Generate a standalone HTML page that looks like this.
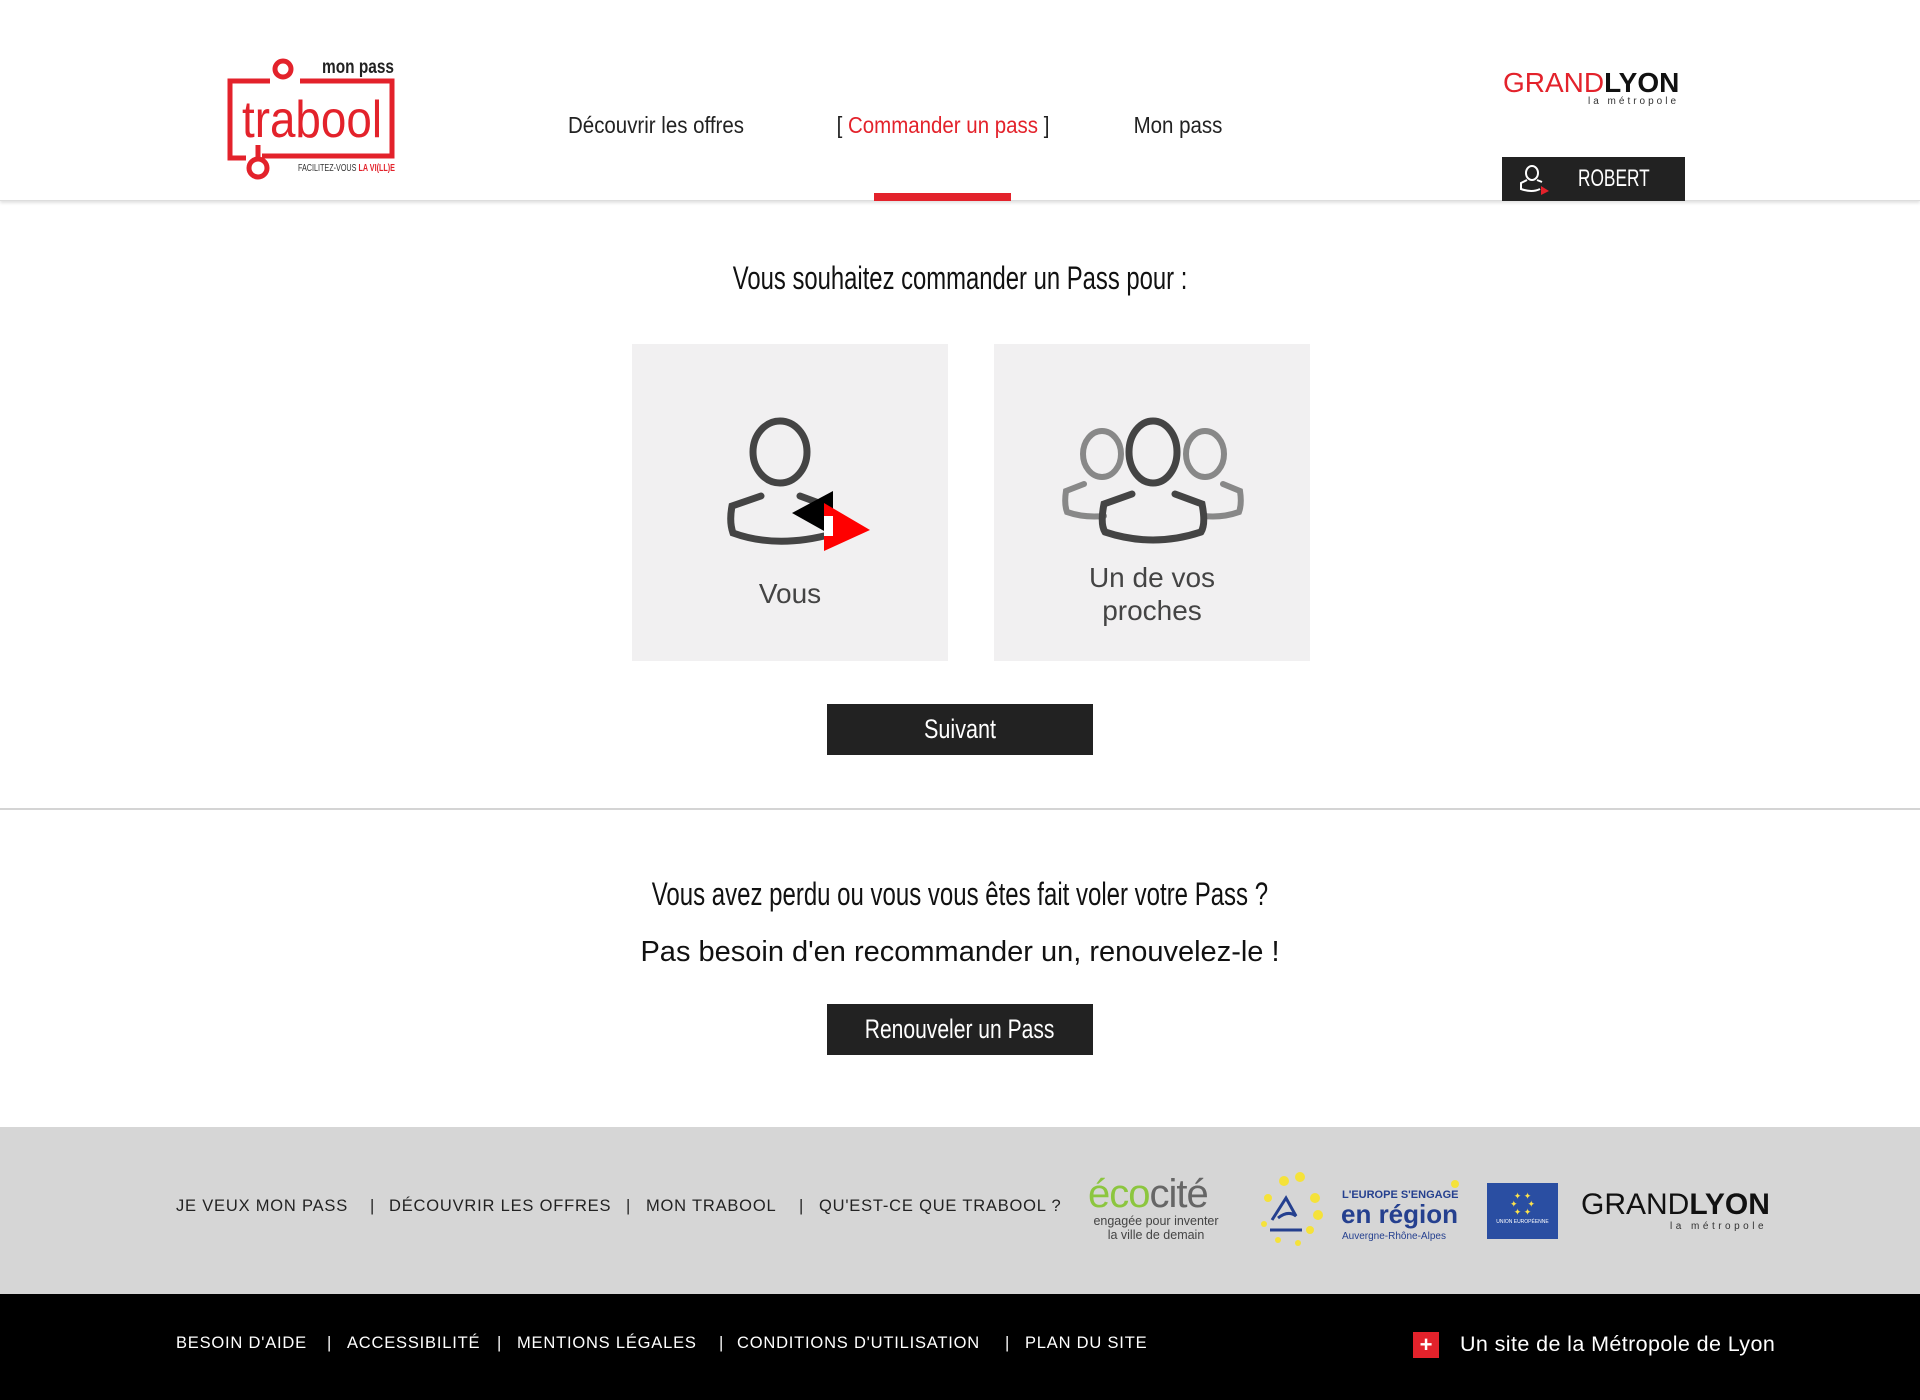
<!DOCTYPE html>
<html><head><meta charset="utf-8"><style>
*{margin:0;padding:0;box-sizing:border-box}
body{width:1920px;height:1400px;background:#fff;font-family:"Liberation Sans",sans-serif;position:relative;overflow:hidden}
.a{position:absolute}
.c{display:inline-block;transform:scaleX(.77)}
.nav{top:112px;font-size:23px;color:#222;white-space:nowrap;transform:translateX(-50%) scaleX(.89)}
.card{background:#f1f0f1;width:316px;height:317px;top:344px}
.btn{background:#222;color:#fff;text-align:center;font-size:27px;left:827px;width:266px;height:51px;line-height:51px}
.fl{position:absolute;font-size:16.5px;color:#222;letter-spacing:.8px;top:1197px;white-space:nowrap}
.bl{position:absolute;font-size:16.5px;color:#fff;letter-spacing:.8px;top:1334px;white-space:nowrap}
</style></head><body>
<div class="a" style="left:0;top:0;width:1920px;height:201px;border-bottom:1px solid #ddd;box-shadow:0 2px 3px rgba(0,0,0,.12)"></div>
<svg class="a" style="left:226px;top:55px" width="172" height="128" viewBox="0 0 172 128">
<g fill="none" stroke="#e3222b" stroke-width="5">
<path d="M44 26 H4 V103 H20"/><path d="M74 26 H166 V101 H36"/>
<circle cx="57" cy="14" r="8"/>
<circle cx="32" cy="113" r="9"/><path d="M32 104 V90"/>
</g>
<text x="16" y="82" font-family="Liberation Sans,sans-serif" font-size="52" fill="#e3222b" textLength="140" lengthAdjust="spacingAndGlyphs">trabool</text>
<text x="96" y="18" font-family="Liberation Sans,sans-serif" font-size="19" font-weight="bold" fill="#222" textLength="72" lengthAdjust="spacingAndGlyphs">mon pass</text>
<text x="72" y="116" font-family="Liberation Sans,sans-serif" font-size="10" fill="#333" textLength="97" lengthAdjust="spacingAndGlyphs">FACILITEZ-VOUS <tspan fill="#e3222b" font-weight="bold">LA VI(LL)E</tspan></text>
</svg>
<div class="a nav" style="left:656px">Découvrir les offres</div>
<div class="a nav" style="left:943px;color:#e3222b"><span style="color:#222">[ </span>Commander un pass<span style="color:#222"> ]</span></div>
<div class="a nav" style="left:1178px">Mon pass</div>
<div class="a" style="left:874px;top:193px;width:137px;height:8px;background:#e3222b"></div>
<div class="a" style="left:1503px;top:67px;font-size:28px;white-space:nowrap"><span style="color:#e3222b">GRAND</span><b style="color:#111">LYON</b></div>
<div class="a" style="left:1588px;top:96px;font-size:10px;letter-spacing:3px;color:#333">la métropole</div>
<div class="a" style="left:1502px;top:157px;width:183px;height:44px;background:#222"></div>
<svg class="a" style="left:1518px;top:164px" width="36" height="32" viewBox="0 0 36 32"><g fill="none" stroke="#fff" stroke-width="2"><ellipse cx="14" cy="9" rx="6" ry="7"/><path d="M9 16 L3 19 V25 Q14 29 22 25"/><path d="M19 16 L24 18"/></g><path d="M23 22 L31 27 L23 31Z" fill="#e3222b"/></svg>
<div class="a" style="left:1578px;top:165px;color:#fff;font-size:24px;transform:scaleX(.72);transform-origin:left">ROBERT</div>

<div class="a" style="left:0;width:1920px;text-align:center;top:260px;font-size:32px;color:#111"><span class="c" style="transform:scaleX(.745)">Vous souhaitez commander un Pass pour :</span></div>
<div class="a card" style="left:632px"></div>
<div class="a card" style="left:994px"></div>
<svg class="a" style="left:632px;top:344px" width="316" height="317">
<g fill="none" stroke="#444" stroke-width="7" stroke-linecap="round"><ellipse cx="148" cy="108" rx="27" ry="31"/><path d="M129 152 L100 162 Q97 178 101 189 Q145 205 200 190"/><path d="M168 152 L195 162"/></g>
<path d="M160 169 L201 147 L201 192Z" fill="#000"/><path d="M192 159 L238 186 L192 207Z" fill="#f00"/><rect x="192" y="172" width="9" height="20" fill="#fff"/>
<text x="158" y="259" text-anchor="middle" font-size="28" fill="#444">Vous</text>
</svg>
<svg class="a" style="left:994px;top:344px" width="316" height="317">
<g fill="none" stroke="#888" stroke-width="6" stroke-linecap="round"><ellipse cx="108" cy="110" rx="19" ry="23"/><path d="M90 140 L72 147 Q70 160 73 168 Q90 174 110 172"/><ellipse cx="211" cy="110" rx="19" ry="23"/><path d="M229 140 L246 147 Q248 160 245 168 Q228 174 210 172"/></g>
<g fill="none" stroke="#444" stroke-width="7" stroke-linecap="round"><ellipse cx="159" cy="108" rx="24" ry="31"/><path d="M138 150 L110 160 Q106 180 111 188 Q159 204 207 188 Q212 180 208 160 L181 150"/></g>
<text x="158" y="243" text-anchor="middle" font-size="28" fill="#444">Un  de vos</text>
<text x="158" y="276" text-anchor="middle" font-size="28" fill="#444">proches</text>
</svg>
<div class="a btn" style="top:704px"><span class="c" style="transform:scaleX(.8)">Suivant</span></div>
<div class="a" style="left:0;top:808px;width:1920px;height:2px;background:#d4d4d4"></div>
<div class="a" style="left:0;width:1920px;text-align:center;top:876px;font-size:32px;color:#111"><span class="c" style="transform:scaleX(.75)">Vous avez perdu ou vous vous êtes fait voler votre Pass ?</span></div>
<div class="a" style="left:0;width:1920px;text-align:center;top:936px;font-size:29px;color:#111">Pas besoin d'en recommander un, renouvelez-le !</div>
<div class="a btn" style="top:1004px"><span class="c" style="transform:scaleX(.78)">Renouveler un Pass</span></div>

<div class="a" style="left:0;top:1127px;width:1920px;height:168px;background:#d6d6d6"></div>
<span class="fl" style="left:176px">JE VEUX MON PASS</span><span class="fl" style="left:370px">|</span>
<span class="fl" style="left:389px">DÉCOUVRIR LES OFFRES</span><span class="fl" style="left:626px">|</span>
<span class="fl" style="left:646px">MON TRABOOL</span><span class="fl" style="left:799px">|</span>
<span class="fl" style="left:819px">QU'EST-CE QUE TRABOOL ?</span>
<div class="a" style="left:1088px;top:1172px;font-size:40px;letter-spacing:-1px"><span style="color:#8cc63f">éco</span><span style="color:#666">cité</span></div>
<div class="a" style="left:1088px;top:1214px;font-size:12.5px;color:#444;text-align:center;width:136px;line-height:14px">engagée pour inventer<br>la ville de demain</div>
<svg class="a" style="left:1248px;top:1168px" width="215" height="80"><g fill="#f5e23a"><circle cx="20" cy="30" r="4"/><circle cx="36" cy="13" r="5"/><circle cx="52" cy="9" r="5"/><circle cx="67" cy="30" r="5"/><circle cx="70" cy="47" r="5"/><circle cx="62" cy="62" r="4"/><circle cx="30" cy="72" r="3"/><circle cx="16" cy="56" r="3"/><circle cx="50" cy="75" r="3"/><circle cx="207" cy="16" r="4"/></g>
<path d="M24 52 L38 30 L48 48 Q40 42 30 50 M22 62 H54" fill="none" stroke="#25408f" stroke-width="3"/>
<text x="94" y="30" font-size="11" font-weight="bold" fill="#25408f">L'EUROPE S'ENGAGE</text>
<text x="93" y="55" font-size="26" font-weight="bold" fill="#25408f">en région</text>
<text x="94" y="71" font-size="10" fill="#25408f">Auvergne-Rhône-Alpes</text></svg>
<div class="a" style="left:1487px;top:1183px;width:71px;height:56px;background:#2a4ea2;color:#fde24b;font-size:9px;text-align:center;line-height:8px;padding-top:9px">✦ ✦<br>✦&nbsp;&nbsp;&nbsp;&nbsp;✦<br>✦ ✦<br><span style="font-size:5px;color:#fff">UNION EUROPÉENNE</span></div>
<div class="a" style="left:1581px;top:1188px;font-size:30px;color:#111;white-space:nowrap">GRAND<b>LYON</b></div>
<div class="a" style="left:1670px;top:1221px;font-size:10px;letter-spacing:3.5px;color:#333">la métropole</div>

<div class="a" style="left:0;top:1294px;width:1920px;height:106px;background:#000"></div>
<span class="bl" style="left:176px">BESOIN D'AIDE</span><span class="bl" style="left:327px">|</span>
<span class="bl" style="left:347px">ACCESSIBILITÉ</span><span class="bl" style="left:497px">|</span>
<span class="bl" style="left:517px">MENTIONS LÉGALES</span><span class="bl" style="left:719px">|</span>
<span class="bl" style="left:737px">CONDITIONS D'UTILISATION</span><span class="bl" style="left:1005px">|</span>
<span class="bl" style="left:1025px">PLAN DU SITE</span>
<div class="a" style="left:1413px;top:1332px;width:26px;height:26px;background:#e3222b;color:#fff;font-weight:bold;text-align:center;line-height:26px;font-size:22px">+</div>
<div class="a" style="left:1460px;top:1332px;font-size:21.5px;color:#fff;letter-spacing:.4px">Un site de la Métropole de Lyon</div>
</body></html>
